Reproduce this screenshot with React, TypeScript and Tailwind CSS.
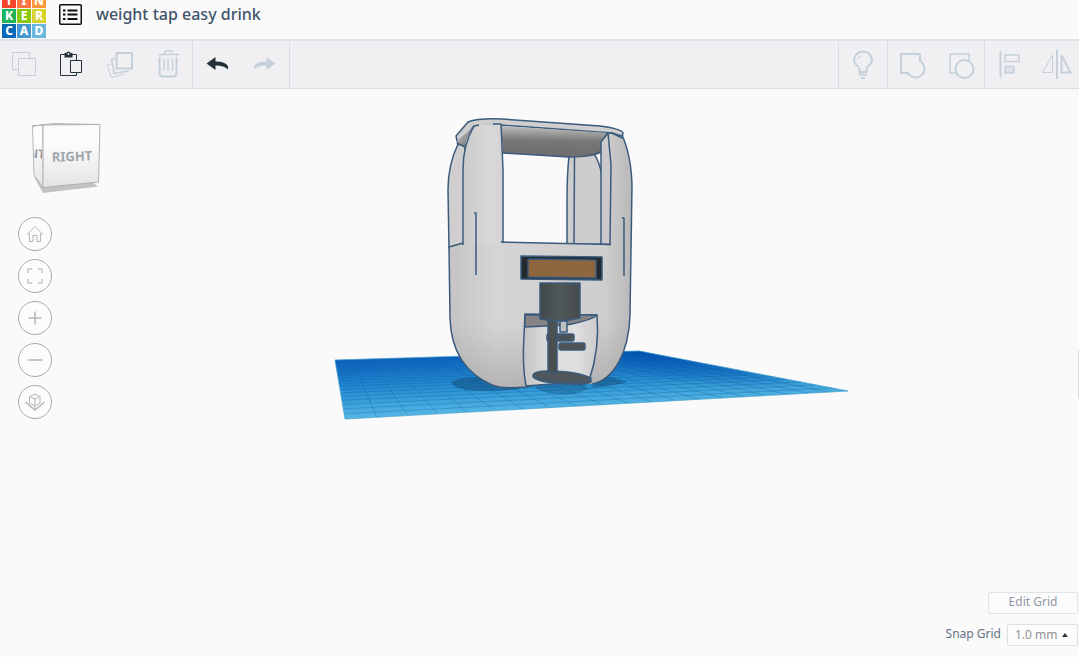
import type { ReactNode } from "react";

// Corners of the workplane on screen: back-left, back-right, front-right, front-left
const PLANE = [
  [335, 360],
  [639, 351],
  [848, 391],
  [345, 419],
];

// Maps a (u, v) position on the workplane to a screen point
function project(u: number, v: number) {
  const [[x0, y0], [x1, y1], [x2, y2], [x3, y3]] = PLANE;
  const sx = x0 - x1 + x2 - x3;
  const sy = y0 - y1 + y2 - y3;
  const det = (x1 - x2) * (y3 - y2) - (x3 - x2) * (y1 - y2);
  const g = (sx * (y3 - y2) - (x3 - x2) * sy) / det;
  const h = ((x1 - x2) * sy - sx * (y1 - y2)) / det;
  const w = g * u + h * v + 1;
  const x = ((x1 - x0 + g * x1) * u + (x3 - x0 + h * x3) * v + x0) / w;
  const y = ((y1 - y0 + g * y1) * u + (y3 - y0 + h * y3) * v + y0) / w;
  return `${x.toFixed(1)} ${y.toFixed(1)}`;
}

function gridPath(steps: number) {
  let d = "";
  for (let i = 0; i <= steps; i++) {
    const t = i / steps;
    d += `M${project(t, 0)}L${project(t, 1)}M${project(0, t)}L${project(1, t)}`;
  }
  return d;
}

const LOGO = [
  { letter: "T", color: "bg-[#f8442c]" },
  { letter: "I", color: "bg-[#ff7440]" },
  { letter: "N", color: "bg-[#ff9838]" },
  { letter: "K", color: "bg-[#1eb45a]" },
  { letter: "E", color: "bg-[#8ac80c]" },
  { letter: "R", color: "bg-[#d8d32c]" },
  { letter: "C", color: "bg-[#0568b8]" },
  { letter: "A", color: "bg-[#4598cf]" },
  { letter: "D", color: "bg-[#68b8e0]" },
];

function ToolButton({ label, active, children }: { label: string; active?: boolean; children: ReactNode }) {
  return (
    <button aria-label={label} className={active ? "w-12 text-[#243238]" : "w-12 text-[#c5d0da]"}>
      <svg viewBox="0 0 48 48" className="h-12 w-12" fill="none" stroke="currentColor">
        {children}
      </svg>
    </button>
  );
}

function ViewButton({ label, children }: { label: string; children: ReactNode }) {
  return (
    <button
      aria-label={label}
      className="flex h-[34px] w-[34px] items-center justify-center rounded-full border border-[#a9abb2] bg-[#fcfcfc] text-[#b4b5b8]"
    >
      <svg viewBox="0 0 32 32" className="h-8 w-8" fill="none" stroke="currentColor">
        {children}
      </svg>
    </button>
  );
}

function Toolbar() {
  return (
    <div className="flex h-12 border-b border-[#dadde2] bg-[#f0f0f2]">
      <div className="flex border-r border-[#dbe0e5]">
        <ToolButton label="Copy">
          <path d="M18 28.5H12.5V11.5H29.5V17" />
          <path d="M18.500 17.500H35.500V34.500H18.500Z" />
        </ToolButton>
        <ToolButton label="Paste" active>
          <path d="M17 13.500H12.500V34.500H28.500V31.500M23 13.500H28.500V19" />
          <path d="M22.500 19.500H33.500V31.500H22.500Z" />
          <path d="M16.500 12H18.500Q18.500 10.500 20.500 10.500T22.500 12H24.500V16.500H16.500Z" fill="currentColor" stroke="none" />
          <circle cx="20.500" cy="13" r="1" fill="#f0f0f2" stroke="none" />
        </ToolButton>
        <ToolButton label="Duplicate and repeat">
          <path d="M20.500 12H36V27.500H20.500Z" strokeWidth="2" />
          <path d="M19 17.500L15.500 18L18 32.500L32 30V29" strokeWidth="1.500" />
          <path d="M15 23L11.500 24L15 36.500L27 33.500V32" />
        </ToolButton>
        <ToolButton label="Delete">
          <path d="M14 13.500H35M20.500 12.500Q20.500 9.500 24.500 9.500T28.500 12.500" strokeWidth="1.500" />
          <path d="M15.500 16V32Q15.500 35.500 19 35.500H29.500Q32.500 35.500 32.500 32V16" strokeWidth="2" />
          <path d="M20 17.500V29.500M24 17.500V29.500M28.500 17.500V29.500" strokeWidth="1.500" />
        </ToolButton>
      </div>
      <div className="flex border-r border-[#dbe0e5]">
        <ToolButton label="Undo" active>
          <path
            d="M13.500 22.500L22.500 16V20.500Q33 20.500 35 25.500V28.500Q31 24.500 22.500 24.500V29Z"
            fill="currentColor"
            stroke="none"
          />
        </ToolButton>
        <ToolButton label="Redo">
          <path
            d="M34.500 22.500L25.500 16V20.500Q15 20.500 13 25.500V28.500Q17 24.500 25.500 24.500V29Z"
            fill="currentColor"
            stroke="none"
          />
        </ToolButton>
      </div>
      <div className="ml-auto flex border-l border-[#dbe0e5]">
        <ToolButton label="Show all">
          <path d="M20.500 31V28Q20 25.500 17.500 24Q15 21.500 15 19A9 8.500 0 0 1 33 19Q33 21.500 30.500 24Q28 25.500 27.500 28V31Z" strokeWidth="2" />
          <path d="M18.500 19Q19 15.500 22.500 15" />
          <path d="M20 33.500H28M22 37H26" strokeWidth="2" />
        </ToolButton>
      </div>
      <div className="flex border-l border-[#dbe0e5]">
        <ToolButton label="Group">
          <path d="M13 13H32V20A8.800 8.800 0 1 1 20 32H13Z" strokeWidth="2" />
        </ToolButton>
        <ToolButton label="Ungroup">
          <path d="M20 32H14V13H33V19" strokeWidth="1.500" />
          <circle cx="28.500" cy="28" r="9" strokeWidth="2" />
        </ToolButton>
      </div>
      <div className="-mr-0.5 flex border-l border-[#dbe0e5]">
        <ToolButton label="Align">
          <path d="M15.500 10V36.500" strokeWidth="2" />
          <path d="M20 14H34V20.500H20Z" strokeWidth="1.500" />
          <path d="M20 25.500H29V32H20Z" strokeWidth="1.500" fill="#dbe2e8" />
        </ToolButton>
        <ToolButton label="Mirror">
          <path d="M24 8.500V38" strokeWidth="2" />
          <path d="M19.500 14V31.500H9.500Z" />
          <path d="M28.500 14V31.500H37.500Z" strokeWidth="2" />
        </ToolButton>
      </div>
    </div>
  );
}

function ViewCube() {
  return (
    <svg viewBox="28 121 76 76" className="ml-2.5 h-[76px] w-[76px]">
      <defs>
        <linearGradient id="cubeFace" x1="0" y1="0" x2="0" y2="1">
          <stop offset="0.300" stopColor="#fcfcfc" />
          <stop offset="1" stopColor="#e4e4e5" />
        </linearGradient>
        <clipPath id="cubeSide">
          <path d="M34 126L42 126V186L35 175Z" />
        </clipPath>
      </defs>
      <path d="M34 177L43 193L98 186.500L92 182Z" fill="#c2c2c3" />
      <path d="M32.500 126L43 125V187.500L34 175Z" fill="url(#cubeFace)" stroke="#b7b7b8" />
      <path d="M32.500 126L54 123.500L100 124.500L43 125Z" fill="#fbfbfb" stroke="#b7b7b8" />
      <path d="M43 125L100 124.500L98.500 182L43 187.500Z" fill="url(#cubeFace)" stroke="#b0b0b1" />
      <g clipPath="url(#cubeSide)">
        <text x="45" y="158" textAnchor="end" transform="rotate(5 38 154)" className="fill-[#8f959d] font-['Noto_Sans'] text-[12px] font-bold">
          FRONT
        </text>
      </g>
      <text x="72" y="161" textAnchor="middle" transform="rotate(-2 72 156)" className="fill-[#a0a5ad] font-['Noto_Sans'] text-[13px] font-bold">
        RIGHT
      </text>
    </svg>
  );
}

function Workplane() {
  const outline = `M${project(0, 0)}L${project(1, 0)}L${project(1, 1)}L${project(0, 1)}Z`;
  return (
    <g>
      <path d={outline} fill="url(#plane)" />
      <path d={outline} fill="url(#planeDepth)" />
      <path d={gridPath(100)} stroke="#0b5ca8" strokeOpacity="0.070" strokeWidth="0.500" fill="none" />
      <path d={gridPath(20)} stroke="#075a9c" strokeOpacity="0.400" strokeWidth="0.700" fill="none" />
      <path d={outline} stroke="#55b5df" strokeOpacity="0.500" fill="none" />
      <path d="M345 364L352 362M346 367L359 364M348 371L356 368M349 374L360 371" stroke="#0a60ab" strokeOpacity="0.500" />
      {/* contact shadows */}
      <path d="M451 383Q459 376 480 377L520 389Q490 393 466 390Q455 388 451 383Z" fill="#12517f" fillOpacity="0.550" />
      <path d="M590 388Q615 386 627 382Q618 378 606 376Z" fill="#12517f" fillOpacity="0.550" />
      <path d="M535 388Q562 401 589 389L580 382H540Z" fill="#12517f" fillOpacity="0.400" />
    </g>
  );
}

function Dispenser() {
  return (
    <g stroke="#3b5b7c" strokeWidth="1.500" strokeLinejoin="round" fill="none">
      {/* rear left arm */}
      <path d="M458 144Q448 165 448 190L449 248L465 243V145Z" fill="#cfcfcf" />
      {/* rear right arm */}
      <path d="M569 156Q567 175 567 200V244H602V176Q599 160 594 154Z" fill="#cdcdcd" />
      <path d="M574.500 156L574 244" />
      {/* lower body and right pillar */}
      <path
        d="M463 243L449 247L450 318C451 352 467 374 492 385Q500 389 526 387L540 384L592 384C614 380 629 352 630 315L632 185Q631 153 621 133L608 133L610 244L503 242Z"
        fill="url(#body)"
        stroke="none"
      />
      <path
        d="M450 290V318C451 352 467 374 492 385Q500 389 526 387L540 384L592 384C614 380 629 352 630 315V290Z"
        fill="url(#bodyShade)"
        stroke="none"
      />
      <path d="M463 243L449 247L450 318C451 352 467 374 492 385Q500 389 526 387L540 384M592 384C614 380 629 352 630 315L632 185Q631 153 621 133" />
      <path d="M456 136L468 122Q478 118 502 119L600 126Q622 129 623 133L622 138L612 133L500 125L474 126L458 145Z" fill="#cfcfcf" />
      <path d="M457 141L474 126Q467 134 465 147L458 144Z" fill="url(#sideLid)" stroke="none" />
      <path d="M457 143L465 147" />
      {/* underside of the lid */}
      <path d="M501 126L610 133L601 142V153Q594 157 569 157L503 153Z" fill="url(#lid)" stroke="none" />
      <path d="M503 153L569 157Q594 157 601 151" />
      <path d="M608 133L601 142V244L610 244.500L611 165Z" fill="#cacaca" />
      {/* front left pillar */}
      <path d="M474 125Q463 144 463 170V244H503V170L501 124Z" fill="url(#pillar)" stroke="none" />
      <path d="M479 125L474 126Q463 144 463 170V245M493 124H501L503 170V243" />
      <path d="M501 242L611 244.500M606 133H612L622 136" />
      <path d="M474 213H476V275M622 218H624V276" />
      {/* display */}
      <path d="M521 256L602 257V280L521 279Z" fill="#24292d" />
      <path d="M528 259L596 260V278L528 277Z" fill="#8e673f" />
      {/* cup recess */}
      <path d="M525 314L597 315Q600 348 589 381L526 386Q522 365 524 335Z" fill="url(#recess)" />
      <path d="M525 315L597 315Q590 321 566 325L525 327Z" fill="#858585" />
      <path d="M560 321H567V332H560Z" fill="#bdbfc0" />
      <rect x="547" y="334" width="27" height="7" rx="2" fill="#4c5255" />
      <rect x="559" y="343" width="26" height="7" rx="2" fill="#4c5255" />
      {/* drip tray and tap */}
      <path d="M533 375Q534 371 548 371Q576 371 591 378V382Q586 385 569 384Q539 383 533 377Z" fill="#50575c" />
      <path d="M533 376Q543 381 565 382Q583 383 591 379" strokeWidth="1" />
      <path d="M548 318H557V373H548Z" fill="#4a5052" />
      <path d="M540 283H580V318Q560 323 540 319Z" fill="url(#tap)" />
    </g>
  );
}

function Scene() {
  return (
    <svg viewBox="0 89 1079 568" className="col-start-1 row-start-1 w-full" role="img" aria-label="3D workplane">
      <defs>
        <linearGradient id="plane" gradientUnits="userSpaceOnUse" x1="400" y1="357" x2="403" y2="417">
          <stop offset="0" stopColor="#1368c6" />
          <stop offset="0.250" stopColor="#1d7dce" />
          <stop offset="0.600" stopColor="#319ad8" />
          <stop offset="1" stopColor="#5bbde8" />
        </linearGradient>
        <radialGradient
          id="planeDepth"
          gradientUnits="userSpaceOnUse"
          cx="0"
          cy="0"
          r="1"
          gradientTransform="translate(640 352) rotate(9) scale(170 26)"
        >
          <stop offset="0" stopColor="#0750b8" stopOpacity="0.700" />
          <stop offset="1" stopColor="#0750b8" stopOpacity="0" />
        </radialGradient>
        <linearGradient id="body">
          <stop offset="0" stopColor="#c4c4c5" />
          <stop offset="0.250" stopColor="#d5d5d5" />
          <stop offset="0.850" stopColor="#cecece" />
          <stop offset="1" stopColor="#b8b8b8" />
        </linearGradient>
        <linearGradient id="bodyShade" x1="0" y1="0" x2="0" y2="1">
          <stop offset="0.300" stopColor="#888" stopOpacity="0" />
          <stop offset="1" stopColor="#777" stopOpacity="0.350" />
        </linearGradient>
        <linearGradient id="pillar" x1="0" y1="0" x2="1" y2="0">
          <stop offset="0" stopColor="#cacaca" />
          <stop offset="0.600" stopColor="#d8d8d8" />
          <stop offset="1" stopColor="#d4d4d4" />
        </linearGradient>
        <linearGradient id="lid" x1="0.060" y1="0" x2="0" y2="1">
          <stop offset="0.050" stopColor="#b5b5b5" />
          <stop offset="0.450" stopColor="#777" />
          <stop offset="1" stopColor="#6d6d6d" />
        </linearGradient>
        <linearGradient id="sideLid" x1="0" y1="0" x2="1" y2="1">
          <stop offset="0.200" stopColor="#bbb" />
          <stop offset="0.800" stopColor="#777" />
        </linearGradient>
        <linearGradient id="recess">
          <stop offset="0" stopColor="#c4c4c4" />
          <stop offset="0.300" stopColor="#dadada" />
          <stop offset="0.700" stopColor="#e0e0e0" />
          <stop offset="1" stopColor="#cbcbcb" />
        </linearGradient>
        <linearGradient id="tap">
          <stop offset="0" stopColor="#42494c" />
          <stop offset="0.500" stopColor="#505759" />
          <stop offset="1" stopColor="#454b4e" />
        </linearGradient>
      </defs>
      <Workplane />
      <Dispenser />
    </svg>
  );
}

export default function App() {
  return (
    <div className="flex min-h-screen flex-col bg-[#fafafa] font-['Noto_Sans',sans-serif]">
      <header className="z-10 flex h-[41px] items-center overflow-hidden border-b-2 border-[#dde1e8] bg-[#fafafa]">
        <a href="#home" aria-label="Tinkercad" className="mb-px ml-0.5 grid grid-cols-3 gap-px self-end">
          {LOGO.map(({ letter, color }) => (
            <span
              key={letter}
              className={`${color} flex h-3.5 w-3.5 items-center justify-center text-[12px] leading-none font-extrabold text-white`}
            >
              {letter}
            </span>
          ))}
        </a>
        <button aria-label="Designs" className="mb-2.5 ml-[13px]">
          <svg viewBox="0 0 23 21" className="h-[21px] w-[23px]" fill="none" stroke="#111">
            <rect x="0.750" y="0.750" width="21.500" height="19.500" rx="1" strokeWidth="1.500" />
            <path d="M4 6.500H6.500M4 10.500H6.500M4 15H6.500M8.500 6.500H18.500M8.500 10.500H18.500M8.500 15H18.500" strokeWidth="2" />
          </svg>
        </button>
        <h1 className="mb-3 ml-3.5 text-base font-medium text-[#41546b]">weight tap easy drink</h1>
      </header>
      <Toolbar />
      <main className="grid flex-1">
        <Scene />
        <nav aria-label="View" className="z-10 col-start-1 row-start-1 flex flex-col gap-2 self-start justify-self-start pt-8 pl-[18px]">
          <div className="mb-3">
            <ViewCube />
          </div>
          <ViewButton label="Home view">
            <path d="M8.500 16L16 8.500L23.500 16H21.500V23.500H18V17.500H14V23.500H10.500V16Z" />
          </ViewButton>
          <ViewButton label="Fit all in view">
            <path d="M9 13V9H13M19 9H23V13M23 19V23H19M13 23H9V19" strokeWidth="1.500" stroke="#c8c8ca" />
          </ViewButton>
          <ViewButton label="Zoom in">
            <path d="M9.500 16H22.500M16 9.500V22.500" strokeWidth="1.500" />
          </ViewButton>
          <ViewButton label="Zoom out">
            <path d="M8.500 16H23.500" strokeWidth="1.500" />
          </ViewButton>
          <ViewButton label="Switch to flat view">
            <path d="M10.500 10.500L16 8L21 10.500V17L16 20L10.500 17ZM10.500 10.500L16 13L21 10.500M16 13V24" />
            <path d="M6.500 16L16 24L25.500 16" strokeWidth="1.500" />
          </ViewButton>
        </nav>
        <button
          aria-label="Show shapes panel"
          className="z-10 col-start-1 row-start-1 mt-[261px] h-12 w-px self-start justify-self-end bg-[#d9dbe0]"
        />
        <div className="z-10 col-start-1 row-start-1 flex flex-col items-end gap-2.5 self-end justify-self-end pr-px pb-[11px] text-[12px]">
          <button className="h-[22px] w-[90px] rounded-xs border border-[#e2e3e8] bg-[#fcfcfc] pb-0.5 leading-4 text-[#8c98a8]">
            Edit Grid
          </button>
          <div className="flex items-center gap-1.5">
            <label htmlFor="snap" className="pb-0.5 text-[#637085]">
              Snap Grid
            </label>
            <div className="grid items-center">
              <select
                id="snap"
                defaultValue="1.0"
                className="col-start-1 row-start-1 h-[22px] w-[71px] appearance-none rounded-xs border border-[#dddfe5] bg-[#fcfcfc] pl-[7px] text-[#8e9194]"
              >
                <option value="0.1">0.1 mm</option>
                <option value="0.5">0.5 mm</option>
                <option value="1.0">1.0 mm</option>
                <option value="2.0">2.0 mm</option>
              </select>
              <svg viewBox="0 0 6 4" className="pointer-events-none col-start-1 row-start-1 mr-2.5 h-1 w-1.5 justify-self-end">
                <path d="M0 4L3 0L6 4Z" fill="#333" />
              </svg>
            </div>
          </div>
        </div>
      </main>
    </div>
  );
}
